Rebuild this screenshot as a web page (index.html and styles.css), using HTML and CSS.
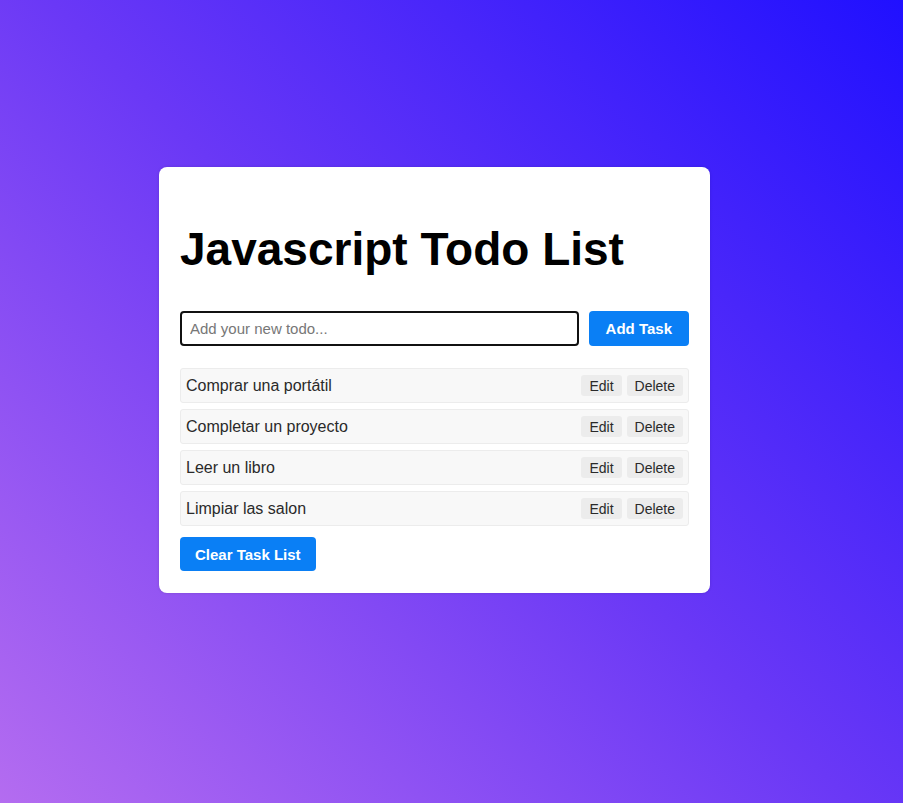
FILE: index.html
```html
<!DOCTYPE html>
<html lang="es">
<head>
<meta charset="utf-8">
<title>Javascript Todo List</title>
<link rel="stylesheet" href="styles.css">
</head>
<body>
<main class="card">
  <h1 class="title">Javascript Todo List</h1>
  <form class="add-form">
    <input class="todo-input" type="text" placeholder="Add your new todo...">
    <button class="btn-primary" type="button">Add Task</button>
  </form>
  <ul class="todo-list">
    <li class="todo-item"><span class="todo-text">Comprar una portátil</span><span class="actions"><button class="btn-small">Edit</button><button class="btn-small">Delete</button></span></li>
    <li class="todo-item"><span class="todo-text">Completar un proyecto</span><span class="actions"><button class="btn-small">Edit</button><button class="btn-small">Delete</button></span></li>
    <li class="todo-item"><span class="todo-text">Leer un libro</span><span class="actions"><button class="btn-small">Edit</button><button class="btn-small">Delete</button></span></li>
    <li class="todo-item"><span class="todo-text">Limpiar las salon</span><span class="actions"><button class="btn-small">Edit</button><button class="btn-small">Delete</button></span></li>
  </ul>
  <button class="btn-primary btn-clear" type="button">Clear Task List</button>
</main>
</body>
</html>
```
FILE: styles.css
```css
* { box-sizing: border-box; }
html, body { height: 100%; }
body {
  margin: 0;
  font-family: "Liberation Sans", Arial, sans-serif;
  background: linear-gradient(45deg, #b46cf0 0%, #6a38f6 50%, #2010ff 100%);
  display: flex;
  justify-content: flex-start;
  align-items: flex-start;
}
.card {
  margin: 167px 0 0 159px;
  width: 551px;
  background: #fff;
  border-radius: 8px;
  padding: 20px 21px 22px;
  box-shadow: 0 0 3px rgba(0,0,0,0.15);
}
.title {
  font-size: 46px;
  font-weight: bold;
  color: #000;
  margin: 36px 0 36px;
  line-height: 52px;
}
.add-form {
  display: flex;
  gap: 10px;
  margin: 0 0 22px;
}
.todo-input {
  flex: 1;
  height: 35px;
  border: 2px solid #111;
  border-radius: 4px;
  padding: 0 8px;
  font-family: "Liberation Sans", Arial, sans-serif;
  font-size: 15px;
  outline: none;
}
.todo-input::placeholder { color: #777; }
.btn-primary {
  background: #0a7ff5;
  color: #fff;
  border: none;
  border-radius: 4px;
  font-family: "Liberation Sans", Arial, sans-serif;
  font-size: 15px;
  font-weight: bold;
  height: 35px;
  padding: 0 17px;
}
.todo-list {
  list-style: none;
  margin: 0 0 11px;
  padding: 0;
  display: flex;
  flex-direction: column;
  gap: 6px;
}
.todo-item {
  display: flex;
  align-items: center;
  justify-content: space-between;
  height: 35px;
  background: #f8f8f8;
  border: 1px solid #ececec;
  border-radius: 3px;
  padding: 0 5px;
}
.todo-text {
  font-size: 16px;
  color: #2a2a2a;
}
.actions {
  display: flex;
  gap: 5px;
}
.btn-small {
  background: #ececec;
  border: none;
  border-radius: 3px;
  height: 21px;
  padding: 0 8px;
  font-family: "Liberation Sans", Arial, sans-serif;
  font-size: 14px;
  color: #2a2a2a;
}
.btn-clear {
  height: 34px;
  padding: 0 15px;
}
```
